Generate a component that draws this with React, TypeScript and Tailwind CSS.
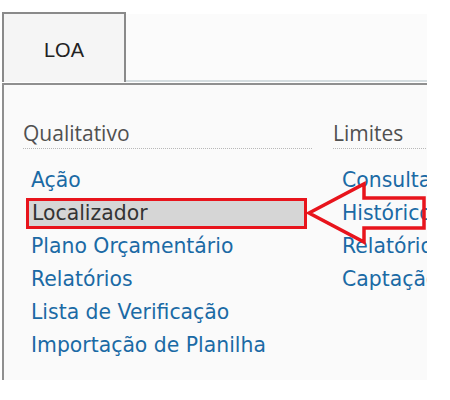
const qualitativo = ['Ação', 'Localizador', 'Plano Orçamentário', 'Relatórios', 'Lista de Verificação', 'Importação de Planilha'];
const limites = ['Consulta', 'Histórico', 'Relatórios', 'Captação'];

function Column({ title, items, width, itemIndent, selected }: { title: string; items: string[]; width: string; itemIndent: string; selected?: string }) {
  return (
    <div className={`${width} shrink-0`}>
      <div className="font-['Open_Sans',sans-serif] text-[21px] leading-[28px] text-[#505050] whitespace-nowrap">{title}</div>
      <div className="mt-[1px] border-b border-dotted border-[#b8b8b8] mr-[21px]" />
      <ul className={`mt-[15px] ${itemIndent}`}>
        {items.map((item) =>
          item === selected ? (
            <li key={item} className="h-[33px] flex items-center">
              <span className="w-[281px] h-[31px] flex items-center px-[3px] border-[3px] border-[#e8141c] bg-[#d6d6d6] text-[#333]">{item}</span>
            </li>
          ) : (
            <li key={item} className="h-[33px] flex items-center px-[5px] whitespace-nowrap text-[#1b6aa5]">{item}</li>
          )
        )}
      </ul>
    </div>
  );
}

export default function App() {
  return (
    <div className="relative w-[450px] h-[400px] bg-white overflow-hidden">
      <div className="pt-[12px] pl-[2px] flex items-end">
        <div className="w-[124px] h-[70px] pt-[3px] border-2 border-b-0 border-[#8a8a8a] bg-[#f5f5f5] flex items-center justify-center font-['Liberation_Sans',Arial,sans-serif] text-[20px] text-[#222]">
          LOA
        </div>
        <div className="w-[301px] h-[68px] bg-[#fbfbfb] border-b-2 border-[#d4dcdf]" />
      </div>
      <div className="ml-[2px] mt-[1px] w-[425px] h-[297px] overflow-hidden bg-[#fafafa] border-t-2 border-l-2 border-[#8f8f8f]">
        <div className="flex pl-[19px] pt-[34px] font-['DejaVu_Sans',Verdana,sans-serif] text-[20.4px]">
          <Column title="Qualitativo" items={qualitativo} width="w-[310px]" itemIndent="ml-[3px]" selected="Localizador" />
          <Column title="Limites" items={limites} width="w-[200px]" itemIndent="ml-[4px]" />
        </div>
      </div>
      <svg className="absolute left-0 top-0 pointer-events-none" width="450" height="400">
        <polygon points="309,213 364,184 364,198 424,198 424,228 364,228 364,242" fill="none" stroke="#e8141c" strokeWidth="3.5" strokeLinejoin="miter" />
      </svg>
    </div>
  );
}
